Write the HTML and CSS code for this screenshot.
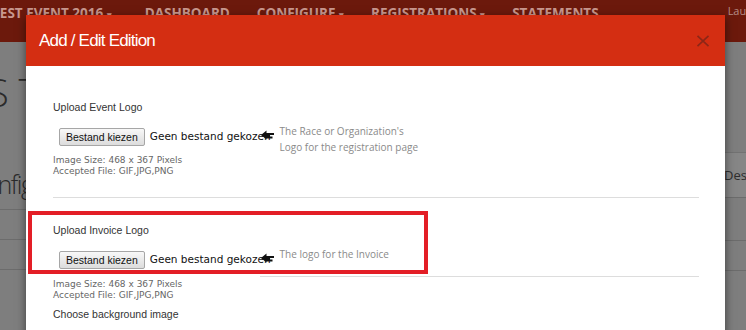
FILE: index.html
```html
<!DOCTYPE html>
<html lang="en">
<head>
    <meta charset="UTF-8">
    <meta name="viewport" content="width=device-width, initial-scale=1.0">
    <title>Add / Edit Edition</title>
    <link rel="stylesheet" href="styles.css">
</head>
<body>
    <header class="topbar">
        <nav class="menu">
            <span class="menu-item menu-first">Test Event 2016 <span class="caret">&#9662;</span></span>
            <span class="menu-item">Dashboard</span>
            <span class="menu-item">Configure <span class="caret">&#9662;</span></span>
            <span class="menu-item">Registrations <span class="caret">&#9662;</span></span>
            <span class="menu-item">Statements</span>
        </nav>
        <span class="user">Laura Smith</span>
    </header>

    <!-- Page behind the modal backdrop -->
    <main class="page">
        <div class="page-left">
            <h1 class="page-title">S T</h1>
            <h2 class="page-sub">Configure</h2>
            <div class="page-rows">
                <div class="page-row"></div>
                <div class="page-row"></div>
                <div class="page-row"></div>
            </div>
        </div>
        <div class="page-right">
            <div class="page-tab">Description</div>
            <div class="page-row tall"></div>
            <div class="page-row"></div>
            <div class="page-row"></div>
        </div>
    </main>

    <!-- Modal -->
    <div class="modal">
        <div class="modal-header">
            <h3 class="modal-title">Add / Edit Edition</h3>
            <svg class="modal-close" width="14" height="12" viewBox="0 0 14 12">
                <path d="M1.5 0.8 L12.5 11.2 M12.5 0.8 L1.5 11.2" stroke="#8c2617" stroke-width="1.6" fill="none"/>
            </svg>
        </div>
        <div class="modal-body">
            <div class="label">Upload Event Logo</div>
            <div class="upload-row">
                <button class="file-btn" type="button">Bestand kiezen</button>
                <span class="file-name">Geen bestand gekozen</span>
                <svg class="hint-icon" width="13" height="10" viewBox="0 0 13 10">
                    <path d="M0 5 L5.5 0.5 L5.5 3 L13 3 L13 5 L9 5 L9 6.5 L11.5 6.5 L11.5 8.5 L5.5 8.5 L5.5 9.5 Z" fill="#111"/>
                </svg>
                <span class="hint">The Race or Organization's<br>Logo for the registration page</span>
            </div>
            <div class="specs">Image Size: 468 x 367 Pixels<br>Accepted File: GIF,JPG,PNG</div>
            <hr class="divider">

            <div class="label label-gap">Upload Invoice Logo</div>
            <div class="upload-row">
                <button class="file-btn" type="button">Bestand kiezen</button>
                <span class="file-name">Geen bestand gekozen</span>
                <svg class="hint-icon" width="13" height="10" viewBox="0 0 13 10">
                    <path d="M0 5 L5.5 0.5 L5.5 3 L13 3 L13 5 L9 5 L9 6.5 L11.5 6.5 L11.5 8.5 L5.5 8.5 L5.5 9.5 Z" fill="#111"/>
                </svg>
                <span class="hint">The logo for the Invoice</span>
            </div>
            <hr class="divider divider-tight">
            <div class="specs specs-tight">Image Size: 468 x 367 Pixels<br>Accepted File: GIF,JPG,PNG</div>
            <div class="label label-next">Choose background image</div>
        </div>
    </div>

    <!-- Red annotation box -->
    <div class="highlight"></div>
</body>
</html>
```

FILE: styles.css
```css
body {
    margin: 0;
    padding: 0;
    height: 330px;
    overflow: hidden;
    background-color: #7e7e7e;
    font-family: 'Liberation Sans', Arial, sans-serif;
}
.topbar {
    display: flex;
    align-items: flex-start;
    height: 42px;
    background-color: #6c190c;
    overflow: hidden;
    white-space: nowrap;
}
.menu {
    display: flex;
    gap: 27px;
    padding-top: 4px;
}
.menu-item {
    font-family: 'Open Sans', sans-serif;
    font-weight: 700;
    font-size: 13.5px;
    line-height: 18px;
    text-transform: uppercase;
    color: #c8978e;
}
.menu-first {
    margin: 0 6px 0 -8px;
}
.caret {
    font-size: 9px;
}
.user {
    margin-left: 129px;
    padding-top: 2px;
    font-family: 'Open Sans', sans-serif;
    font-size: 11px;
    line-height: 18px;
    color: #b48c86;
}

/* page behind the backdrop */
.page {
    display: flex;
    justify-content: space-between;
    height: 288px;
    white-space: nowrap;
}
.page-left {
    width: 26px;
}
.page-title {
    margin: 31px 0 0 -12px;
    font-family: 'Open Sans', sans-serif;
    font-weight: 300;
    font-size: 38px;
    line-height: 38px;
    color: #2a2a2a;
}
.page-sub {
    margin: 61px 0 0 -30px;
    font-family: 'Open Sans', sans-serif;
    font-weight: 300;
    font-size: 25px;
    line-height: 24px;
    letter-spacing: -1.4px;
    color: #2a2a2a;
}
.page-rows {
    margin-top: 13px;
}
.page-row {
    height: 29px;
    border-top: 1px solid #6c6c6c;
}
.page-right {
    width: 21px;
    padding-top: 110px;
}
.page-tab {
    height: 44px;
    line-height: 44px;
    background-color: #868686;
    border-top: 1px solid #727272;
    border-bottom: 1px solid #6c6c6c;
    font-family: 'Open Sans', sans-serif;
    font-size: 13px;
    color: #2e2e2e;
    margin-left: -1px;
    overflow: hidden;
}
.page-right .page-row.tall {
    height: 42px;
    border-top: none;
}

/* modal */
.modal {
    position: absolute;
    left: 26px;
    top: 15px;
    width: 699px;
    height: 330px;
    background-color: #fff;
    box-shadow: 0 3px 9px rgba(0, 0, 0, 0.5);
}
.modal-header {
    display: flex;
    align-items: center;
    justify-content: space-between;
    height: 51px;
    padding: 0 15px 0 13px;
    background-color: #d42e12;
}
.modal-title {
    margin: 0;
    font-family: 'Liberation Sans', Arial, sans-serif;
    font-weight: 400;
    font-size: 17px;
    letter-spacing: -0.8px;
    color: #fff;
}
.modal-body {
    padding: 34px 26px 0 27px;
}
.label {
    font-size: 10.5px;
    line-height: 14px;
    color: #333;
}
.label-gap {
    margin-top: 25px;
}
.label-next {
    margin-top: 6px;
}
.upload-row {
    display: flex;
    align-items: flex-start;
    margin: 9px 0 0 6px;
}
.file-btn {
    margin-top: 5px;
    height: 18px;
    padding: 0 6px;
    font-family: 'Liberation Sans', Arial, sans-serif;
    font-size: 10.5px;
    color: #111;
    border: 1px solid #a6a6a6;
    border-radius: 2px;
    background: linear-gradient(#f8f8f8, #dcdcdc);
}
.file-name {
    margin-left: 5px;
    margin-top: 5px;
    font-family: 'DejaVu Sans', Verdana, sans-serif;
    font-size: 10.5px;
    line-height: 16px;
    color: #111;
}
.hint-icon {
    margin: 7px 0 0 -10px;
    flex: none;
}
.hint {
    margin-left: 6px;
    font-family: 'Open Sans', sans-serif;
    font-size: 10px;
    line-height: 16px;
    color: #8a8a8a;
}
.specs {
    font-family: 'DejaVu Sans', Verdana, sans-serif;
    font-size: 9px;
    line-height: 11px;
    color: #666;
}
.specs-tight {
    margin-top: 2px;
}
.divider {
    margin: 20px 0 0;
    border: none;
    border-top: 1px solid #ddd;
}
.divider-tight {
    margin: 7px 0 0 207px;
}

/* annotation */
.highlight {
    position: absolute;
    left: 28px;
    top: 211px;
    width: 400px;
    height: 63px;
    box-sizing: border-box;
    border: 4px solid #e31e26;
}
```
